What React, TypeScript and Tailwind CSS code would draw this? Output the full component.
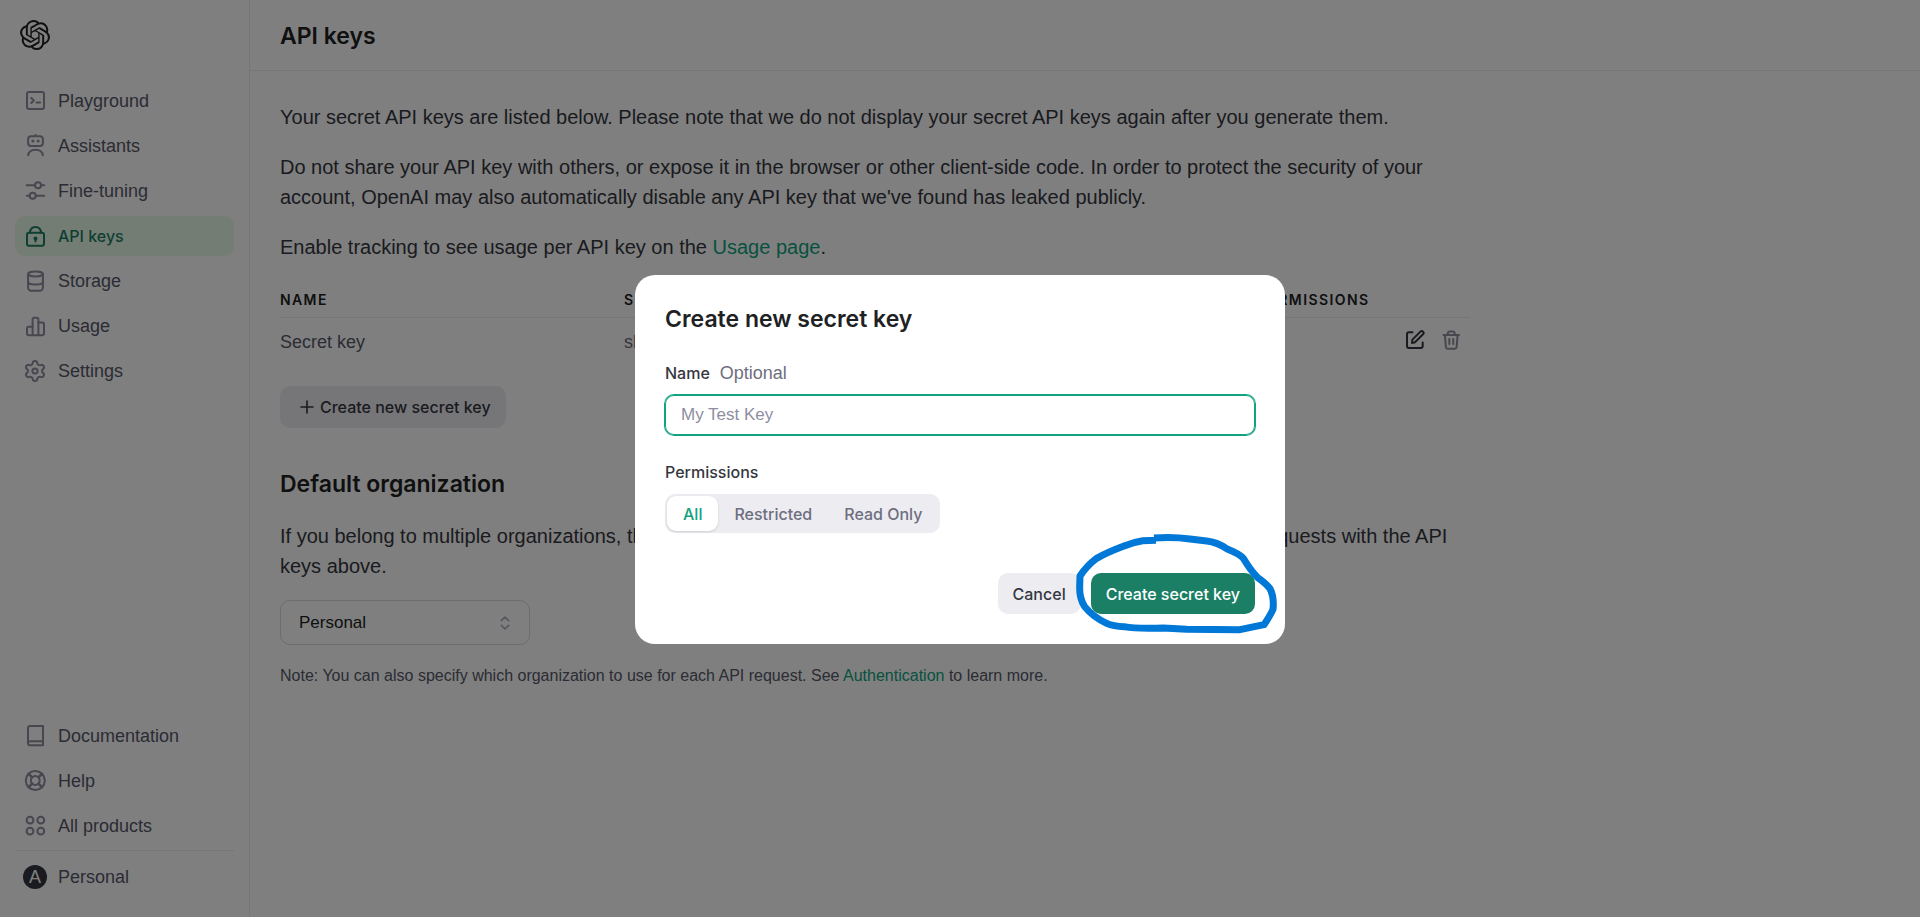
import type { ReactNode } from "react";
import { SiOpenai } from "react-icons/si";

function Icon({ children }: { children: ReactNode }) {
  return (
    <svg
      viewBox="0 0 24 24"
      className="size-6 shrink-0"
      fill="none"
      stroke="currentColor"
      strokeWidth="2"
      strokeLinecap="round"
      strokeLinejoin="round"
      aria-hidden="true"
    >
      {children}
    </svg>
  );
}

const mainNav = [
  {
    label: "Playground",
    icon: (
      <>
        <rect x="4" y="3" width="17" height="17" rx="2" />
        <path d="M8.3 9l2.5 2.5-2.5 2.5M13.5 13.5h3.6" />
      </>
    ),
  },
  {
    label: "Assistants",
    icon: (
      <>
        <path d="M12.5 1v1" />
        <rect x="5.1" y="2.2" width="14.8" height="9.8" rx="3" />
        <circle cx="9.9" cy="7" r="1.5" fill="currentColor" stroke="none" />
        <circle cx="15.1" cy="7" r="1.5" fill="currentColor" stroke="none" />
        <path d="M5.2 21.3c0-3.3 3.2-5.6 7.3-5.6s7.3 2.3 7.3 5.6" />
      </>
    ),
  },
  {
    label: "Fine-tuning",
    icon: (
      <>
        <path d="M3.8 6.3H12M18 6.3h3.2M3.8 16.7h3M12.7 16.7h8.5" />
        <circle cx="15" cy="6.3" r="3" />
        <circle cx="9.7" cy="16.7" r="3" />
      </>
    ),
  },
  {
    label: "API keys",
    icon: (
      <>
        <rect x="4" y="8.8" width="17" height="13" rx="2" />
        <path d="M6.9 8.6C7.2 5 9.4 2.9 12.5 2.9S17.8 5 18.1 8.6" />
        <circle cx="12.5" cy="14.4" r="2" fill="currentColor" stroke="none" />
        <path d="M12.5 15v2.5" />
      </>
    ),
  },
  {
    label: "Storage",
    icon: (
      <>
        <ellipse cx="12.5" cy="5" rx="7.4" ry="2.4" />
        <path d="M5.1 5v14c0 1.700 2 2.800 4 2.800h6.800c2 0 4-1.100 4-2.800V5" />
        <path d="M5.1 13c0 1.500 3.300 2.600 7.400 2.600s7.400-1.100 7.400-2.600" />
      </>
    ),
  },
  {
    label: "Usage",
    icon: (
      <>
        <path d="M9.6 21.200H6a2 2 0 0 1-2-2v-5a1.500 1.500 0 0 1 1.500-1.500h4.100" />
        <path d="M9.6 21.200V5.200a1.500 1.500 0 0 1 1.500-1.500h2.800a1.500 1.500 0 0 1 1.500 1.500v16z" />
        <path d="M15.400 8.400h4.100A1.500 1.500 0 0 1 21 9.900v9.300a2 2 0 0 1-2 2h-3.600" />
      </>
    ),
  },
  {
    label: "Settings",
    icon: (
      <>
        <path d="M9.671 4.136a2.34 2.34 0 0 1 4.659 0 2.34 2.34 0 0 0 3.319 1.915 2.34 2.34 0 0 1 2.33 4.033 2.34 2.34 0 0 0 0 3.831 2.34 2.34 0 0 1-2.33 4.033 2.34 2.34 0 0 0-3.319 1.915 2.34 2.34 0 0 1-4.659 0 2.34 2.34 0 0 0-3.32-1.915 2.34 2.34 0 0 1-2.33-4.033 2.34 2.34 0 0 0 0-3.831A2.34 2.34 0 0 1 6.35 6.051a2.34 2.34 0 0 0 3.319-1.915" />
        <circle cx="12" cy="12" r="2.6" />
      </>
    ),
  },
];

const footerNav = [
  {
    label: "Documentation",
    icon: <path d="M20 17.300V2H7a2 2 0 0 0-2 2v15.300a2 2 0 0 1 2-2h13zM20 17.300v4H7a2 2 0 0 1-2-2" />,
  },
  {
    label: "Help",
    icon: (
      <>
        <circle cx="12.300" cy="11.500" r="9.500" />
        <circle cx="12.300" cy="11.500" r="4.400" />
        <path
          d="M5.600 4.800l3.600 3.600M19 4.800l-3.600 3.600M5.600 18.200l3.600-3.600M19 18.200l-3.600-3.600"
          strokeWidth="2.600"
        />
      </>
    ),
  },
  {
    label: "All products",
    icon: (
      <>
        <circle cx="7" cy="6.200" r="3.400" />
        <circle cx="17.800" cy="6.200" r="3.400" />
        <circle cx="7" cy="17.200" r="3.400" />
        <circle cx="17.800" cy="17.200" r="3.400" />
      </>
    ),
  },
];

function NavItem({ label, icon, active = false }: { label: string; icon: ReactNode; active?: boolean }) {
  return (
    <li>
      <a
        href="#"
        aria-current={active ? "page" : undefined}
        className={
          active
            ? "flex h-10 items-center gap-[11px] rounded-[10px] bg-[#e9fbe9] pl-2 font-['Inter',sans-serif] text-base font-medium text-[#1a7f64]"
            : "flex h-10 items-center gap-[11px] rounded-[10px] pl-2 text-lg text-[#565869]"
        }
      >
        <span className={active ? "text-[#1a7f64]" : "text-[#8e8ea0]"}>
          <Icon>{icon}</Icon>
        </span>
        {label}
      </a>
    </li>
  );
}

function Sidebar() {
  return (
    <aside className="flex w-[250px] shrink-0 flex-col border-r border-[#ececf1] px-[15px] pt-5 pb-5">
      <a href="#" aria-label="OpenAI" className="mb-[31px] ml-[5px] text-[#202123]">
        <SiOpenai size={30} />
      </a>
      <nav className="flex grow flex-col justify-between">
        <ul className="flex flex-col gap-[5px]">
          {mainNav.map((item) => (
            <NavItem key={item.label} {...item} active={item.label === "API keys"} />
          ))}
        </ul>
        <ul className="flex flex-col gap-[5px] pb-1">
          {footerNav.map((item) => (
            <NavItem key={item.label} {...item} />
          ))}
        </ul>
      </nav>
      <button type="button" className="flex flex-col border-t border-[#ececf1] pt-[6px] text-left">
        <span className="flex h-10 items-center gap-[11px] pl-2 text-lg text-[#565869]">
          <span className="flex size-6 items-center justify-center rounded-full bg-[#353740] text-lg text-white">A</span>
          Personal
        </span>
      </button>
    </aside>
  );
}

const columns = ["Name", "Secret key", "Created", "Last used", "Permissions"];

function KeyTable() {
  return (
    <table className="mt-5 w-full table-fixed text-left">
      <colgroup>
        <col className="w-[344px]" />
        <col className="w-[220px]" />
        <col className="w-[180px]" />
        <col />
        <col className="w-[112px]" />
        <col className="w-[100px]" />
      </colgroup>
      <thead>
        <tr className="h-[35px] border-b border-[#ececf1] font-['Inter',sans-serif] text-sm text-[#202123] uppercase">
          {columns.map((name) => (
            <th key={name} scope="col" className="pt-[2px] font-semibold tracking-widest whitespace-nowrap">
              {name}
            </th>
          ))}
          <th scope="col" aria-label="Actions" />
        </tr>
      </thead>
      <tbody>
        <tr className="h-[50px] text-lg text-[#6e6e80]">
          <td className="text-[#565869]">Secret key</td>
          <td>sk-...a1B2</td>
          <td>Jan 5, 2024</td>
          <td>Never</td>
          <td>All</td>
          <td>
            <div className="flex items-center justify-end gap-[12px] pr-[7px] pb-1">
              <button type="button" aria-label="Edit key" className="text-[#353740]">
                <Icon>
                  <path d="M9.500 4.300H6a2 2 0 0 0-2 2V18a2 2 0 0 0 2 2h11.700a2 2 0 0 0 2-2v-3.600" />
                  <path d="M9 15l.400-3.400 8-8a1.700 1.700 0 0 1 2.600 2.600l-8 8z" />
                </Icon>
              </button>
              <button type="button" aria-label="Delete key" className="text-[#8e8ea0]">
                <Icon>
                  <path d="M4.500 7h15.500M8.500 6.800l.500-2.300a1.400 1.400 0 0 1 1.400-1h3.700a1.400 1.400 0 0 1 1.400 1l.500 2.300M5.900 7.200l1 12a1.800 1.800 0 0 0 1.800 1.600h7.100a1.800 1.800 0 0 0 1.800-1.600l1-12M10.300 11v5M14.200 11v5" />
                </Icon>
              </button>
            </div>
          </td>
        </tr>
      </tbody>
    </table>
  );
}

function Main() {
  return (
    <main className="min-w-0 grow">
      <header className="flex h-[71px] items-center border-b border-[#ececf1] px-[30px] pt-[2px]">
        <h1 className="font-['Inter',sans-serif] text-[23px] font-semibold text-[#202123]">API keys</h1>
      </header>
      <div className="max-w-[1250px] px-[30px] pt-[31px] text-xl leading-[30px] text-[#353740]">
        <div className="flex flex-col gap-5">
          <p>
            Your secret API keys are listed below. Please note that we do not display your secret API keys again after
            you generate them.
          </p>
          <p>
            Do not share your API key with others, or expose it in the browser or other client-side code. In order to
            protect the security of your account, OpenAI may also automatically disable any API key that we've found
            has leaked publicly.
          </p>
          <p>
            Enable tracking to see usage per API key on the{" "}
            <a href="#" className="text-[#10a37f]">
              Usage page
            </a>
            .
          </p>
        </div>
        <KeyTable />
        <button
          type="button"
          className="mt-[19px] flex h-[42px] items-center gap-[6px] rounded-[10px] bg-[#ececf1] pr-[15px] pl-5 font-['Inter',sans-serif] text-base font-medium"
        >
          <svg
            viewBox="0 0 14 14"
            className="size-[14px]"
            stroke="currentColor"
            strokeWidth="1.600"
            strokeLinecap="round"
            aria-hidden="true"
          >
            <path d="M7 1v12M1 7h12" />
          </svg>
          Create new secret key
        </button>
        <h2 className="mt-[41px] font-['Inter',sans-serif] text-[23px] font-semibold text-[#202123]">
          Default organization
        </h2>
        <p className="mt-[22px]">
          If you belong to multiple organizations, this setting controls which organization is used by default when
          making requests with the API keys above.
        </p>
        <div className="mt-[19px] grid w-[250px] items-center">
          <select
            aria-label="Default organization"
            className="col-start-1 row-start-1 h-[45px] w-full appearance-none rounded-[10px] border border-[#d9d9e3] bg-transparent pl-[18px] text-[17px] text-[#202123]"
          >
            <option>Personal</option>
          </select>
          <svg
            viewBox="0 0 10 14"
            className="pointer-events-none col-start-1 row-start-1 mr-5 h-[14px] w-[10px] justify-self-end text-[#acacbe]"
            fill="none"
            stroke="currentColor"
            strokeWidth="1.600"
            strokeLinecap="round"
            strokeLinejoin="round"
            aria-hidden="true"
          >
            <path d="M1.300 4.600L5 1.200l3.700 3.400M1.300 9.400L5 12.800l3.700-3.400" />
          </svg>
        </div>
        <p className="mt-[19px] text-base leading-6 text-[#565869]">
          Note: You can also specify which organization to use for each API request. See{" "}
          <a href="#" className="text-[#10a37f]">
            Authentication
          </a>{" "}
          to learn more.
        </p>
      </div>
    </main>
  );
}

const permissions = ["All", "Restricted", "Read Only"];

function CreateKeyDialog() {
  return (
    <div className="fixed inset-0 flex items-center justify-center bg-black/50 pt-[2px]">
      <form
        role="dialog"
        aria-modal="true"
        aria-labelledby="dialog-title"
        className="relative w-[650px] rounded-[20px] bg-white px-[30px] pt-[31px] pb-[30px] font-['Inter',sans-serif] text-base font-medium text-[#353740]"
      >
        <h2 id="dialog-title" className="text-[23px] leading-[26px] font-semibold text-[#202123]">
          Create new secret key
        </h2>
        <div className="mt-[29px] flex items-center gap-[10px] leading-6">
          <label htmlFor="key-name">Name</label>
          <span className="font-['Liberation_Sans',sans-serif] text-lg leading-6 font-normal text-[#6e6e80]">
            Optional
          </span>
        </div>
        <input
          id="key-name"
          type="text"
          placeholder="My Test Key"
          className="mt-[10px] block h-10 w-full rounded-[9px] border border-[#10a37f] px-[15px] font-['Liberation_Sans',sans-serif] text-[17px] font-normal ring-1 ring-[#10a37f] outline-none placeholder:text-[#8e8ea0]"
        />
        <fieldset className="mt-[25px]">
          <legend className="leading-6">Permissions</legend>
          <div className="mt-[10px] flex w-fit rounded-[10px] bg-[#ececf1] p-[2px]">
            {permissions.map((name) => (
              <button
                key={name}
                type="button"
                aria-pressed={name === "All"}
                className={
                  name === "All"
                    ? "h-[35px] rounded-[9px] bg-white px-4 text-[#10a37f] shadow-sm"
                    : "h-[35px] rounded-[9px] px-4 text-[#6e6e80]"
                }
              >
                {name}
              </button>
            ))}
          </div>
        </fieldset>
        <div className="mt-10 flex justify-end gap-[10px]">
          <button type="button" className="h-[41px] rounded-[10px] bg-[#ececf1] px-[15px]">
            Cancel
          </button>
          <button type="submit" className="h-[41px] rounded-[10px] bg-[#1a7f64] px-[15px] text-white">
            Create secret key
          </button>
        </div>
        <svg
          viewBox="345 69 612 303"
          className="pointer-events-none absolute right-[6px] bottom-[10px] h-[101px] w-[204px]"
          fill="none"
          stroke="#0078d7"
          strokeWidth="21"
          strokeLinejoin="round"
          aria-hidden="true"
        >
          <path d="M588 91L548 92Q520 96 490 109Q440 128 410 145Q380 168 360 198L359 230Q358 265 374 290Q400 322 440 340Q460 349 492 350Q530 357 610 354L680 358L840 359L912 344Q930 318 939 298Q943 262 930 236Q918 220 892 202Q872 182 850 145Q840 132 800 116Q770 96 740 93L690 87Q640 80 582 84" />
        </svg>
      </form>
    </div>
  );
}

export default function App() {
  return (
    <div className="flex min-h-screen bg-white font-['Liberation_Sans',Arial,sans-serif]">
      <Sidebar />
      <Main />
      <CreateKeyDialog />
    </div>
  );
}
